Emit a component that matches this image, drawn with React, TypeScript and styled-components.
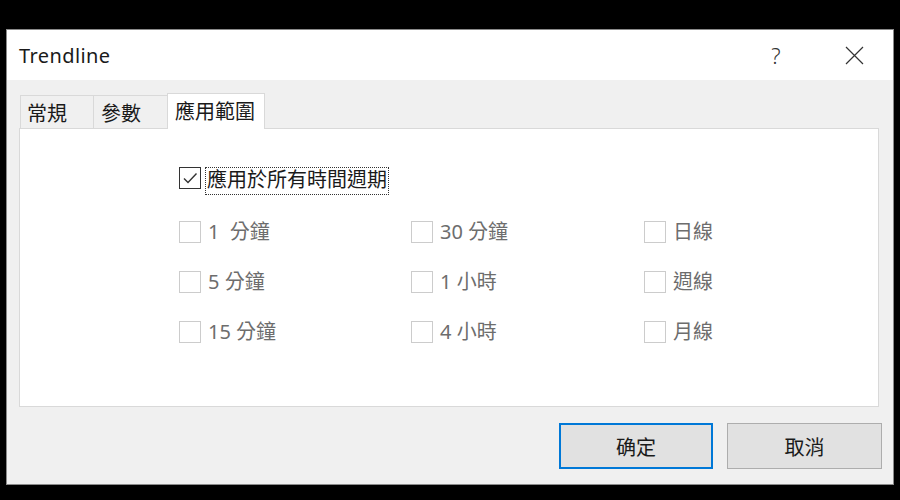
import React from "react";
import styled, { createGlobalStyle } from "styled-components";

const Global = createGlobalStyle`
  html, body { margin: 0; padding: 0; background: #000; }
  body { width: 900px; height: 500px; overflow: hidden; }
  * { box-sizing: border-box; }
`;

const FONT = `"Noto Sans", "Noto Sans CJK TC", sans-serif`;

const Screen = styled.div`
  width: 900px;
  height: 500px;
  padding: 29px 0 0 6px;
  background: #000;
`;

const Window = styled.div`
  width: 888px;
  height: 456px;
  border: 1px solid #8a8a8a;
  background: #f0f0f0;
  display: flex;
  flex-direction: column;
  font-family: ${FONT};
`;

const TitleBar = styled.div`
  height: 50px;
  background: #fff;
  display: flex;
  align-items: center;
  padding-left: 12px;
`;

const Title = styled.div`
  flex: 1;
  font-size: 20px;
  color: #1a1a1a;
  letter-spacing: 0.4px;
`;

const TitleButton = styled.div`
  width: 78px;
  height: 50px;
  display: flex;
  align-items: center;
  justify-content: center;
  color: #333;
  font-size: 22px;
  font-weight: 300;
`;

const Body = styled.div`
  height: 404px;
  padding: 13px 11px 15px 12px;
  display: flex;
  flex-direction: column;
`;

const TabStrip = styled.div`
  display: flex;
  align-items: flex-end;
  height: 36px;
  margin-bottom: -1px;
  padding-left: 1px;
`;

const Tab = styled.div<{ $active?: boolean; $first?: boolean }>`
  position: relative;
  z-index: ${(p) => (p.$active ? 2 : 1)};
  width: ${(p) => (p.$active ? 98 : p.$first ? 74 : 75)}px;
  height: ${(p) => (p.$active ? 36 : 34)}px;
  margin-left: ${(p) => (p.$first ? 0 : -1)}px;
  border: 1px solid #d9d9d9;
  border-bottom: ${(p) => (p.$active ? "none" : "1px solid #d9d9d9")};
  background: ${(p) => (p.$active ? "#fff" : "#f0f0f0")};
  display: flex;
  align-items: center;
  justify-content: flex-start;
  padding-left: ${(p) => (p.$first ? 6 : 7)}px;
  padding-bottom: ${(p) => (p.$active ? 2 : 0)}px;
  font-size: 20px;
  color: #1a1a1a;
`;

const Panel = styled.div`
  position: relative;
  z-index: 1;
  height: 279px;
  margin-right: 3px;
  background: #fff;
  border: 1px solid #d9d9d9;
  padding: 38px 0 0 159px;
`;

const AllRow = styled.div`
  display: flex;
  align-items: flex-start;
  margin-bottom: 26px;
`;

const Box = styled.div<{ $checked?: boolean }>`
  width: 22px;
  height: 22px;
  flex: none;
  border: 1px solid ${(p) => (p.$checked ? "#333" : "#cccccc")};
  background: #fff;
  display: flex;
  align-items: center;
  justify-content: center;
`;

const FocusLabel = styled.div`
  margin-left: 4px;
  padding: 0 1px 0 1px;
  height: 28px;
  border: 1px dotted #333;
  font-size: 20px;
  line-height: 24px;
  color: #1a1a1a;
`;

const Grid = styled.div`
  display: grid;
  grid-template-columns: 232px 233px auto;
  row-gap: 28px;
`;

const Item = styled.div`
  display: flex;
  align-items: center;
  height: 22px;
`;

const Label = styled.span`
  margin-left: 7px;
  font-size: 20px;
  line-height: 22px;
  color: #6d6d6d;
  white-space: pre;
`;

const Footer = styled.div`
  display: flex;
  justify-content: flex-end;
  gap: 14px;
  margin-top: 16px;
`;

const Button = styled.div<{ $default?: boolean }>`
  width: ${(p) => (p.$default ? 154 : 155)}px;
  height: 46px;
  background: #e1e1e1;
  border: ${(p) => (p.$default ? "2px solid #0078d7" : "1px solid #adadad")};
  display: flex;
  align-items: center;
  justify-content: center;
  font-size: 20px;
  color: #1a1a1a;
`;

const items = [
  "1  分鐘",
  "30 分鐘",
  "日線",
  "5 分鐘",
  "1 小時",
  "週線",
  "15 分鐘",
  "4 小時",
  "月線",
];

export default function App() {
  return (
    <>
      <Global />
      <Screen>
        <Window>
          <TitleBar>
            <Title>Trendline</Title>
            <TitleButton>?</TitleButton>
            <TitleButton>
              <svg width="19" height="19" viewBox="0 0 19 19">
                <path d="M1 1 L18 18 M18 1 L1 18" stroke="#333" strokeWidth="1.2" fill="none" />
              </svg>
            </TitleButton>
          </TitleBar>
          <Body>
            <TabStrip>
              <Tab $first>常規</Tab>
              <Tab>參數</Tab>
              <Tab $active>應用範圍</Tab>
            </TabStrip>
            <Panel>
              <AllRow>
                <Box $checked>
                  <svg width="16" height="16" viewBox="0 0 16 16">
                    <path d="M2 8.5 L6 12.5 L14.5 3.5" stroke="#333" strokeWidth="1.4" fill="none" />
                  </svg>
                </Box>
                <FocusLabel>應用於所有時間週期</FocusLabel>
              </AllRow>
              <Grid>
                {items.map((t) => (
                  <Item key={t}>
                    <Box />
                    <Label>{t}</Label>
                  </Item>
                ))}
              </Grid>
            </Panel>
            <Footer>
              <Button $default>确定</Button>
              <Button>取消</Button>
            </Footer>
          </Body>
        </Window>
      </Screen>
    </>
  );
}
